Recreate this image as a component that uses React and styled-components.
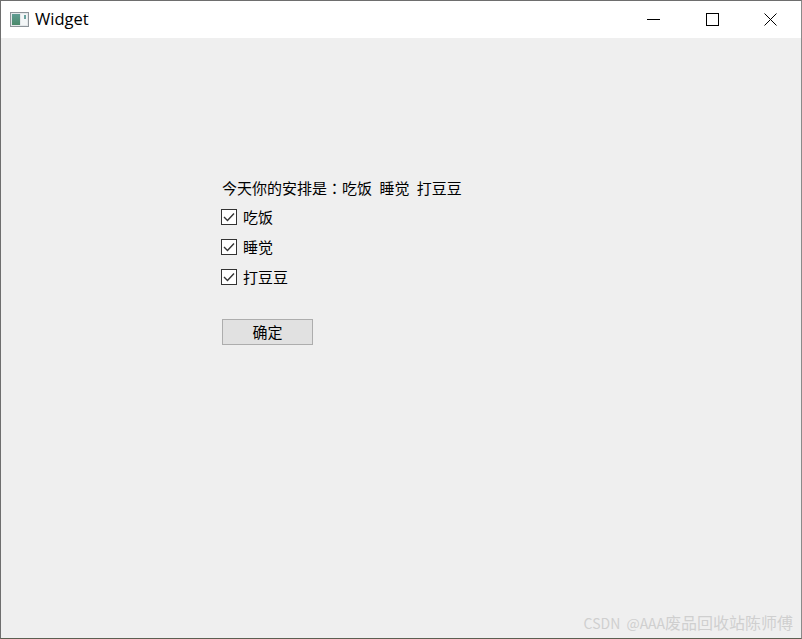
import React from "react";
import styled, { createGlobalStyle } from "styled-components";

const Global = createGlobalStyle`
  html, body { margin: 0; padding: 0; background: #efefef; }
  * { box-sizing: border-box; }
`;

const Window = styled.div`
  width: 802px;
  height: 639px;
  display: flex;
  flex-direction: column;
  border: 1px solid #6e6e6e;
  border-bottom-color: #5c5f50;
  border-right-color: #8a8a8a;
  overflow: hidden;
  font-family: "Noto Sans CJK SC", "Liberation Sans", sans-serif;
`;

const TitleBar = styled.div`
  height: 37px;
  flex: none;
  background: #fff;
  display: flex;
  align-items: center;
  padding: 0 1px 0 9px;
`;

const AppName = styled.span`
  font-family: "Open Sans", "Liberation Sans", sans-serif;
  font-size: 16.5px;
  color: #000;
  margin: -2px 0 0 6px;
  flex: 1;
`;

const WinButton = styled.div`
  width: 58.5px;
  height: 37px;
  display: flex;
  align-items: center;
  justify-content: center;
`;

const Content = styled.div`
  flex: 1;
  background: #efefef;
  display: flex;
  flex-direction: column;
  padding: 140px 0 0 221px;
`;

const Summary = styled.div`
  font-size: 15px;
  line-height: 20px;
  height: 20px;
  color: #000;
  white-space: pre;
  word-spacing: 4px;
  margin-bottom: 4px;
`;

const Colon = styled.span`
  font-family: "Noto Sans CJK TC", sans-serif;
`;

const CheckRow = styled.label`
  height: 30px;
  display: flex;
  align-items: center;
  gap: 6px;
  font-size: 15px;
  line-height: 28px;
  color: #000;
`;

const CheckBox = styled.span`
  width: 16px;
  height: 16px;
  margin-left: -1px;
  border: 1px solid #333;
  background: #fff;
  display: flex;
  align-items: center;
  justify-content: center;
`;

const ConfirmButton = styled.button`
  width: 91px;
  height: 26px;
  margin-top: 27px;
  padding: 0 0 2px;
  background: #e1e1e1;
  border: 1px solid #adadad;
  font-family: inherit;
  font-size: 15px;
  color: #000;
`;

const Watermark = styled.div`
  margin-top: auto;
  align-self: flex-end;
  padding: 0 8px 5px 0;
  font-size: 16px;
  line-height: 20px;
  color: #cfcfcf;
  white-space: pre;
`;

const WatermarkLatin = styled.span`
  font-size: 14px;
  word-spacing: 3px;
`;

const AppIcon = () => (
  <svg width="19" height="15" viewBox="0 0 19 15">
    <defs>
      <linearGradient id="pane" x1="0" y1="0" x2="0" y2="1">
        <stop offset="0" stopColor="#5f9c93" />
        <stop offset="1" stopColor="#4b8a6a" />
      </linearGradient>
    </defs>
    <rect x="0.5" y="0.5" width="18" height="14" fill="#e4e8ea" stroke="#8d9499" />
    <rect x="2" y="2" width="8" height="11" fill="url(#pane)" />
    <rect x="11" y="2" width="6" height="11" fill="#f3f6f7" />
    <rect x="14" y="3" width="2" height="4" fill="#6aa3a0" />
  </svg>
);

const Check = () => (
  <svg width="12" height="10" viewBox="0 0 12 10">
    <path d="M1 5 L4.5 8.5 L11 1.5" fill="none" stroke="#333" strokeWidth="1.4" />
  </svg>
);

const options = ["吃饭", "睡觉", "打豆豆"];

export default function App() {
  return (
    <>
      <Global />
      <Window>
        <TitleBar>
          <AppIcon />
          <AppName>Widget</AppName>
          <WinButton>
            <svg width="13" height="13" viewBox="0 0 13 13">
              <path d="M0 6.5 H13" stroke="#000" strokeWidth="1" />
            </svg>
          </WinButton>
          <WinButton>
            <svg width="13" height="13" viewBox="0 0 13 13">
              <rect x="0.5" y="0.5" width="12" height="12" fill="none" stroke="#000" />
            </svg>
          </WinButton>
          <WinButton>
            <svg width="13" height="13" viewBox="0 0 13 13">
              <path d="M0.5 0.5 L12.5 12.5 M12.5 0.5 L0.5 12.5" stroke="#000" strokeWidth="1" />
            </svg>
          </WinButton>
        </TitleBar>
        <Content>
          <Summary>今天你的安排是<Colon>：</Colon>吃饭 睡觉 打豆豆</Summary>
          {options.map((name) => (
            <CheckRow key={name}>
              <CheckBox>
                <Check />
              </CheckBox>
              {name}
            </CheckRow>
          ))}
          <ConfirmButton>确定</ConfirmButton>
          <Watermark><WatermarkLatin>CSDN @AAA</WatermarkLatin>废品回收站陈师傅</Watermark>
        </Content>
      </Window>
    </>
  );
}
